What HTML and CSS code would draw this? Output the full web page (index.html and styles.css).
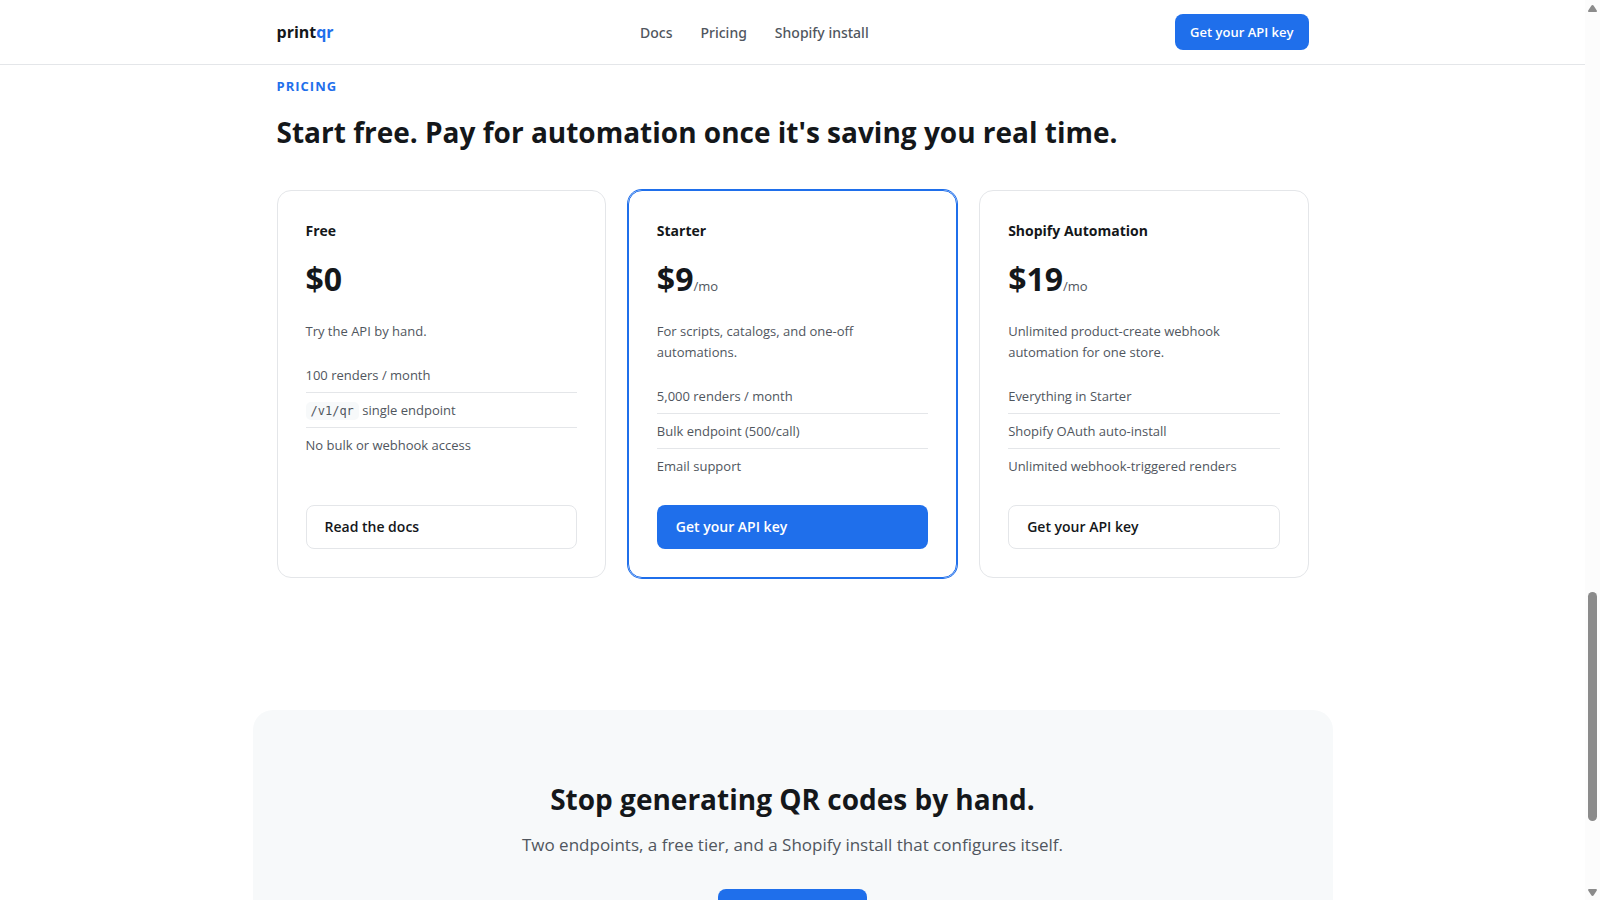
FILE: index.html
```html
<!DOCTYPE html>
<html lang="en">
<head>
<meta charset="utf-8">
<meta name="viewport" content="width=device-width, initial-scale=1">
<title>printqr</title>
<link rel="stylesheet" href="styles.css">
</head>
<body>
<div class="window">
  <div class="page">
    <header class="site-header">
      <div class="container header-row">
        <a class="logo" href="#">print<span class="logo-accent">qr</span></a>
        <nav class="nav">
          <a href="#docs">Docs</a>
          <a href="#pricing">Pricing</a>
          <a href="#install">Shopify install</a>
        </nav>
        <a class="btn btn-primary btn-small" href="#key">Get your API key</a>
      </div>
    </header>
    <main>
      <section class="container pricing" id="pricing">
        <p class="eyebrow">Pricing</p>
        <h2 class="title">Start free. Pay for automation once it's saving you real time.</h2>
        <div class="plans">
          <article class="plan">
            <h3 class="plan-name">Free</h3>
            <p class="price">$0</p>
            <p class="plan-text">Try the API by hand.</p>
            <ul class="features">
              <li>100 renders / month</li>
              <li><code>/v1/qr</code> single endpoint</li>
              <li>No bulk or webhook access</li>
            </ul>
            <a class="btn btn-outline" href="#docs">Read the docs</a>
          </article>
          <article class="plan plan-featured">
            <h3 class="plan-name">Starter</h3>
            <p class="price">$9<span class="per">/mo</span></p>
            <p class="plan-text">For scripts, catalogs, and one-off automations.</p>
            <ul class="features">
              <li>5,000 renders / month</li>
              <li>Bulk endpoint (500/call)</li>
              <li>Email support</li>
            </ul>
            <a class="btn btn-primary" href="#key">Get your API key</a>
          </article>
          <article class="plan">
            <h3 class="plan-name">Shopify Automation</h3>
            <p class="price">$19<span class="per">/mo</span></p>
            <p class="plan-text">Unlimited product-create webhook automation for one store.</p>
            <ul class="features">
              <li>Everything in Starter</li>
              <li>Shopify OAuth auto-install</li>
              <li>Unlimited webhook-triggered renders</li>
            </ul>
            <a class="btn btn-outline" href="#key">Get your API key</a>
          </article>
        </div>
      </section>
      <section class="cta">
        <h2 class="title">Stop generating QR codes by hand.</h2>
        <p class="cta-text">Two endpoints, a free tier, and a Shopify install that configures itself.</p>
        <a class="btn btn-primary" href="#key">Get your API key</a>
      </section>
    </main>
  </div>
  <div class="scrollbar" aria-hidden="true">
    <svg class="arrow" viewBox="0 0 9 7"><path d="M4.5 0 Q5.2 0 5.7 .8 L8.8 5.5 Q9.2 7 8 7 H1 Q-.2 7 .2 5.5 L3.3 .8 Q3.8 0 4.5 0Z"/></svg>
    <div class="track"><div class="thumb"></div></div>
    <svg class="arrow" viewBox="0 0 9 7"><path d="M4.5 7 Q5.2 7 5.7 6.2 L8.8 1.5 Q9.2 0 8 0 H1 Q-.2 0 .2 1.5 L3.3 6.2 Q3.8 7 4.5 7Z"/></svg>
  </div>
</div>
</body>
</html>
```
FILE: styles.css
```css
:root {
  --ink: #14171a;
  --muted: #50565e;
  --line: #e4e6e9;
  --soft: #f7f9fa;
  --accent: #1f6feb;
}

* { box-sizing: border-box; }

body {
  margin: 0;
  background: #fff;
  color: var(--ink);
  font-family: "Open Sans", "Noto Sans", sans-serif;
  font-size: 14px;
}

h2, h3, p, ul { margin: 0; }

a { color: inherit; text-decoration: none; }

.window {
  display: flex;
  height: 100vh;
  overflow: hidden;
}

.page {
  flex: 1;
  min-width: 0;
  overflow: hidden;
}

.container {
  max-width: 1080px;
  margin: 0 auto;
  padding: 0 24px;
}

.site-header { border-bottom: 1px solid var(--line); }

.header-row {
  display: grid;
  grid-template-columns: auto auto auto;
  justify-content: space-between;
  align-items: center;
  height: 64px;
}

.logo {
  font-size: 16px;
  font-weight: 700;
}

.logo-accent { color: var(--accent); }

.nav {
  display: flex;
  gap: 28px;
  color: var(--muted);
  font-family: "Noto Sans", "Open Sans", sans-serif;
  font-weight: 500;
}

.btn {
  display: block;
  padding: 10px 18px;
  border: 1px solid transparent;
  border-radius: 8px;
  font-size: 14px;
  font-weight: 600;
  line-height: 22px;
}

.btn-primary {
  background: var(--accent);
  color: #fff;
}

.btn-outline { border-color: var(--line); }

.btn-small {
  padding: 7px 14px;
  font-size: 13px;
  line-height: 20px;
}

.pricing { padding-top: 11px; }

.eyebrow {
  color: var(--accent);
  font-size: 13px;
  font-weight: 700;
  line-height: 20px;
  letter-spacing: 1px;
  text-transform: uppercase;
}

.title {
  font-size: 28px;
  font-weight: 700;
  line-height: 38px;
}

.pricing .title { margin: 17px 0 39px; }

.plans {
  display: grid;
  grid-template-columns: repeat(3, 1fr);
  gap: 22px;
}

.plan {
  display: flex;
  flex-direction: column;
  padding: 28px;
  border: 1px solid var(--line);
  border-radius: 14px;
}

.plan-featured {
  border-color: var(--accent);
  box-shadow: 0 0 0 1px var(--accent);
}

.plan-name {
  font-size: 14px;
  font-weight: 700;
  line-height: 24px;
}

.price {
  margin: 10px 0 17px;
  font-size: 32px;
  font-weight: 700;
  line-height: 51px;
}

.per {
  color: var(--muted);
  font-size: 13px;
  font-weight: 500;
  line-height: 20px;
}

.plan-text {
  margin-bottom: 16px;
  color: var(--muted);
  font-size: 13px;
  line-height: 21px;
}

.features {
  margin-bottom: 22px;
  padding: 0;
  color: var(--muted);
  font-size: 13px;
  line-height: 22px;
  list-style: none;
}

.features li { padding: 6px 0; }

.features li + li { border-top: 1px solid var(--line); }

.features code {
  padding: 2px 5px;
  border-radius: 5px;
  background: var(--soft);
  font-family: "DejaVu Sans Mono", monospace;
  font-size: 12px;
  line-height: 16px;
}

.plan .btn { margin-top: auto; }

.cta {
  display: flex;
  flex-direction: column;
  align-items: center;
  max-width: 1080px;
  margin: 132px auto 0;
  padding: 70px 24px;
  border-radius: 20px;
  background: var(--soft);
  text-align: center;
}

.cta-text {
  margin: 12px 0 30px;
  color: var(--muted);
  font-size: 17px;
  line-height: 29px;
}

.scrollbar {
  display: flex;
  flex-direction: column;
  align-items: center;
  width: 15px;
  padding: 5px 0 4px;
  background: #fcfcfc;
}

.arrow {
  width: 9px;
  height: 7px;
  fill: #8b8b8b;
}

.track {
  display: grid;
  grid-template-rows: 580fr 229fr 68fr;
  flex: 1;
  width: 9px;
}

.thumb {
  grid-row: 2;
  border-radius: 5px;
  background: #8b8b8b;
}
```
